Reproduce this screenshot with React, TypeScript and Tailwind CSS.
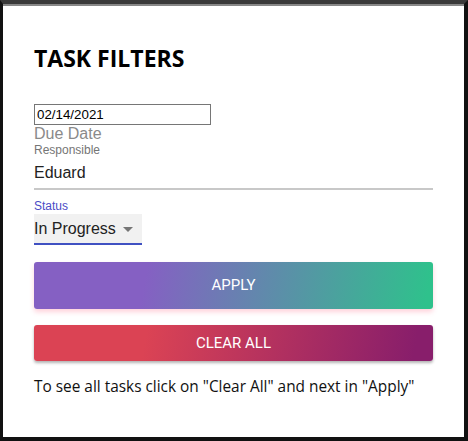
import React from 'react';

const App: React.FC = () => {
  return (
    <div className="w-[468px] h-[441px] bg-white border-t-[4px] border-t-[#3a3a3a] border-l-[3px] border-r-[4px] border-b-[4px] border-[#111] shadow-[inset_0_2px_0_#888] font-['Open_Sans',sans-serif]">
      <div className="pt-[38px] pl-[31px] pr-[31px]">
        <h1 className="text-[23px] leading-[32px] font-bold text-black">TASK FILTERS</h1>

        <div className="mt-[30px] flex flex-col font-['Liberation_Sans',Arial,sans-serif]">
          <input
            type="text"
            defaultValue="02/14/2021"
            className="w-[177px] h-[21px] border border-[#767676] px-[2px] text-[13.33px] text-black outline-none"
          />
          <label className="text-[16px] leading-[17px] text-[#8a8a8a]">Due Date</label>

          <label className="mt-[1px] text-[12px] leading-[14px] text-[#757575]">Responsible</label>
          <div className="h-[33px] border-b-2 border-[#c8c8c8] flex items-center">
            <span className="text-[16px] text-[#222]">Eduard</span>
          </div>

          <label className="mt-[9px] text-[12px] leading-[14px] text-[#4b4bc6]">Status</label>
          <div className="mt-[1px] w-[108px] h-[31px] bg-[#f1f1f1] border-b-2 border-[#4051c2] flex items-center">
            <span className="text-[16px] text-[#222]">In Progress</span>
            <svg width="10" height="5" viewBox="0 0 10 5" className="ml-[7px] mt-[2px]">
              <path d="M0 0 L10 0 L5 5 Z" fill="#757575" />
            </svg>
          </div>
        </div>

        <button className="mt-[17px] w-full h-[47px] rounded-[3px] bg-[linear-gradient(100deg,#8560c3_28%,#2fc18c_98%)] shadow-[0_3px_5px_rgba(255,105,135,0.3)] text-white text-[15px] font-normal font-['Roboto',sans-serif]">
          APPLY
        </button>

        <button className="mt-[16px] w-full h-[36px] rounded-[3px] bg-[linear-gradient(100deg,#db4354_28%,#881e6b_95%)] shadow-[0_2px_3px_rgba(0,0,0,0.3)] text-white text-[15px] font-normal font-['Roboto',sans-serif]">
          CLEAR ALL
        </button>

        <p className="mt-[14px] text-[15.4px] text-[#111]">
          To see all tasks click on "Clear All" and next in "Apply"
        </p>
      </div>
    </div>
  );
};

export default App;
